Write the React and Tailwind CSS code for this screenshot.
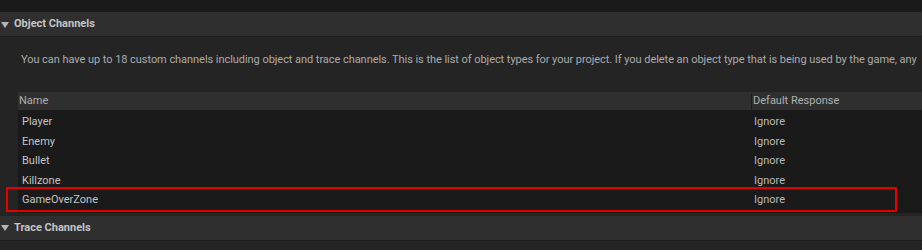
import React from "react";

const rows = ["Player", "Enemy", "Bullet", "Killzone", "GameOverZone"];

function Section({ title }) {
  return (
    <div className="flex h-[25px] items-center bg-[#2f2f2f] border-b border-[#1c1c1c]">
      <svg width="8" height="6" viewBox="0 0 8 6" className="ml-[1px] mt-[1px]">
        <polygon points="0,0 8,0 4,6" fill="#b5b5b5" />
      </svg>
      <span className="ml-[5px] pt-[1px] text-[11px] font-bold text-[#c4c4c4]">{title}</span>
    </div>
  );
}

export default function App() {
  return (
    <div
      className="relative w-[922px] h-[250px] overflow-hidden bg-[#242424]"
      style={{ fontFamily: "Roboto, 'Liberation Sans', sans-serif" }}
    >
      <div className="h-[12px] bg-[#1a1a1a]" />
      <Section title="Object Channels" />
      <div className="pl-[21px] pt-[15px] h-[55px] text-[11px] tracking-[-0.05px] text-[#ababab] whitespace-nowrap">
        You can have up to 18 custom channels including object and trace channels. This is the list of object types for your project. If you delete an object type that is being used by the game, any
      </div>
      <div className="ml-[18px] bg-[#1a1a1a] text-[11px]">
        <div className="flex h-[18px] items-center bg-[#2f2f2f] text-[#b0b0b0] pt-[1px]">
          <div className="w-[733px] pl-[1px]">Name</div>
          <div className="h-full border-l border-[#1e1e1e] pl-[1px] flex items-center">Default Response</div>
        </div>
        <div className="pt-[2.5px] pb-[2.5px]">
          {rows.map((r) => (
            <div key={r} className="flex h-[19.5px] items-center text-[#c4c4c4]">
              <div className="w-[734px] pl-[4px]">{r}</div>
              <div className="pl-[2px] text-[#b8b8b8]">Ignore</div>
            </div>
          ))}
        </div>
      </div>
      <div className="mt-[3px]">
        <Section title="Trace Channels" />
      </div>
      <div className="absolute left-[6px] top-[187px] w-[891px] h-[25px] border-2 border-[#e50000]" />
    </div>
  );
}
